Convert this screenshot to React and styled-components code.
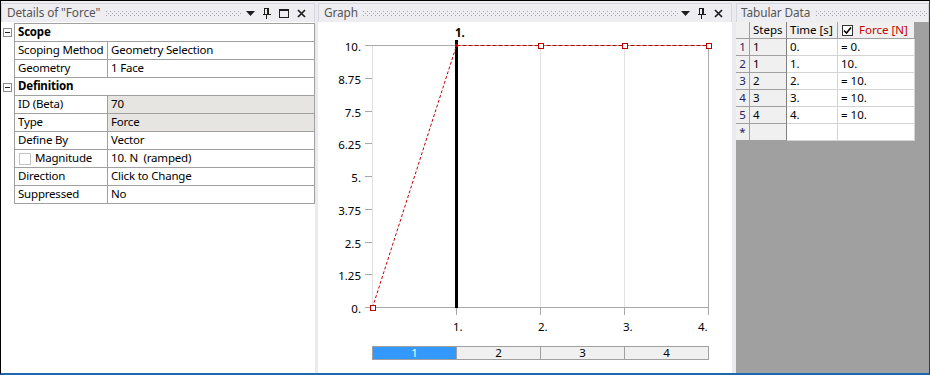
import React from 'react';
import styled, { createGlobalStyle } from 'styled-components';

const Global = createGlobalStyle`
  html, body { margin: 0; padding: 0; background: #fff; }
  body { font-family: "Noto Sans", "DejaVu Sans", sans-serif; }
`;

const FONT = `"Noto Sans", "DejaVu Sans", sans-serif`;

const Frame = styled.div`
  width: 930px;
  height: 375px;
  box-sizing: border-box;
  border-top: 1px solid #000;
  border-left: 1px solid #000;
  border-right: 1px solid #3a3a3a;
  border-bottom: 2px solid #1b6ab0;
  background: #eeeef2;
  display: flex;
  font-family: ${FONT};
  font-size: 11.5px;
  color: #000;
  overflow: hidden;
`;

const Panel = styled.div`
  width: ${(p) => p.$w}px;
  flex: none;
  display: flex;
  flex-direction: column;
  min-height: 0;
`;

const Splitter = styled.div`
  width: ${(p) => p.$w}px;
  flex: none;
  background: #ebebef;
`;

const Header = styled.div`
  margin-top: 2px;
  height: 19px;
  box-sizing: border-box;
  border: 1px solid #d6d6de;
  border-bottom: none;
  background: #eeeef2;
  display: flex;
  align-items: center;
  padding: 0 8px 2px ${(p) => p.$pl}px;
  color: #555;
  font-size: 11.8px;
  letter-spacing: -0.1px;
  white-space: nowrap;
`;

const Dots = styled.div`
  flex: 1;
  height: 5px;
  margin: 2px ${(p) => p.$mr}px 0 ${(p) => p.$ml}px;
  background-image:
    conic-gradient(from 90deg at 1px 1px, transparent 0 50%, #a4a4ac 0 75%, transparent 0),
    conic-gradient(from 90deg at 1px 1px, transparent 0 50%, #a4a4ac 0 75%, transparent 0);
  background-size: 4px 4px, 4px 4px;
  background-position: 0 0, 2px 2px;
`;

const Icons = styled.div`
  display: flex;
  align-items: center;
  gap: ${(p) => p.$gap}px;
  margin-top: 2px;
`;

const Content = styled.div`
  flex: 1;
  min-height: 0;
  background: ${(p) => p.$bg};
  display: flex;
  flex-direction: column;
`;

/* ---------- property grid ---------- */
const PropGrid = styled.div`
  margin-top: 1px;
  display: flex;
  flex-direction: column;
  letter-spacing: -0.2px;
`;

const PropRow = styled.div`
  display: flex;
  height: 18px;
  &:first-child { height: 19px; }
`;

const Gutter = styled.div`
  width: 13px;
  flex: none;
  display: flex;
  align-items: center;
  padding-left: 2px;
  box-sizing: border-box;
`;

const CollapseBox = styled.div`
  width: 9px;
  height: 9px;
  box-sizing: border-box;
  border: 1px solid #8a8a8a;
  display: flex;
  align-items: center;
  justify-content: center;
  &::after {
    content: '';
    width: 5px;
    height: 1px;
    background: #222;
  }
`;

const Cells = styled.div`
  width: 301px;
  flex: none;
  display: flex;
  box-sizing: border-box;
  border-left: 1px solid #a0a0a0;
  border-right: 1px solid #a0a0a0;
  border-bottom: 1px solid #a0a0a0;
  ${PropRow}:first-child & { border-top: 1px solid #a0a0a0; }
`;

const NameCell = styled.div`
  width: 93px;
  flex: none;
  border-right: 1px solid #a0a0a0;
  display: flex;
  align-items: center;
  padding: 0 0 2px 3px;
  box-sizing: border-box;
  white-space: nowrap;
`;

const ValueCell = styled.div`
  flex: 1;
  display: flex;
  align-items: center;
  padding: 0 0 2px 3px;
  background: ${(p) => (p.$ro ? '#e7e5e2' : '#fff')};
  white-space: pre;
`;

const GroupCell = styled.div`
  flex: 1;
  display: flex;
  align-items: center;
  padding: 0 0 2px 3px;
  font-weight: 700;
`;

const CheckBox = styled.div`
  width: 12px;
  height: 12px;
  box-sizing: border-box;
  border: 1px solid #c4c4c4;
  background: #fff;
  margin: 2px 4px 0 1px;
`;

/* ---------- graph ---------- */
const StepBar = styled.div`
  margin: 6px 0 0 54px;
  width: 337px;
  height: 14px;
  box-sizing: border-box;
  border: 1px solid #a0a0a0;
  display: flex;
`;

const StepSeg = styled.div`
  flex: 1;
  display: flex;
  align-items: center;
  justify-content: center;
  font-size: 11.5px;
  line-height: 1;
  background: ${(p) => (p.$active ? '#3399ff' : '#f0f0f0')};
  color: ${(p) => (p.$active ? '#fff' : '#000')};
  & + & { border-left: 1px solid #a0a0a0; }
`;

/* ---------- tabular ---------- */
const DataGrid = styled.div`
  display: grid;
  grid-template-columns: 14px 37px 51px 77px;
  grid-auto-rows: 17px;
  width: 179px;
`;

const DCell = styled.div`
  box-sizing: border-box;
  display: flex;
  align-items: center;
  justify-content: ${(p) => (p.$center ? 'center' : 'flex-start')};
  padding: 0 0 1px ${(p) => (p.$center ? 0 : 3)}px;
  white-space: pre;
  background: ${(p) => (p.$gray ? '#f0f0f0' : '#fff')};
  border-right: 1px solid ${(p) => p.$br || (p.$gray ? '#a0a0a0' : '#d4d4d4')};
  border-bottom: 1px solid ${(p) => (p.$gray ? '#a0a0a0' : '#d4d4d4')};
  color: ${(p) => p.$color || '#000'};
`;

const HeadCheck = styled.div`
  width: 11px;
  height: 11px;
  box-sizing: border-box;
  border: 1px solid #333;
  background: #fff;
  margin: 1px 6px 0 1px;
  display: flex;
  align-items: center;
  justify-content: center;
`;

/* ---------- icons ---------- */
const DropIcon = () => (
  <svg width="9" height="5" viewBox="0 0 9 5"><polygon points="0,0 9,0 4.5,5" fill="#1e1e1e" /></svg>
);
const PinIcon = () => (
  <svg width="8" height="11" viewBox="0 0 8 11">
    <rect x="1.5" y="0.5" width="4" height="6" fill="none" stroke="#1e1e1e" />
    <rect x="4" y="0" width="2" height="7" fill="#1e1e1e" />
    <rect x="0" y="6" width="8" height="1" fill="#1e1e1e" />
    <rect x="3" y="7" width="1" height="4" fill="#1e1e1e" />
  </svg>
);
const MaxIcon = () => (
  <svg width="10" height="9" viewBox="0 0 10 9">
    <rect x="0.5" y="1" width="9" height="7.5" fill="none" stroke="#1e1e1e" />
    <rect x="0" y="0" width="10" height="2" fill="#1e1e1e" />
  </svg>
);
const CloseIcon = () => (
  <svg width="9" height="9" viewBox="0 0 9 9">
    <path d="M1 1 L8 8 M8 1 L1 8" stroke="#1e1e1e" strokeWidth="1.7" />
  </svg>
);
const CheckMark = () => (
  <svg width="9" height="9" viewBox="0 0 9 9">
    <path d="M1 4.5 L3.5 7 L8 1.5" fill="none" stroke="#000" strokeWidth="1.6" />
  </svg>
);

/* ---------- chart ---------- */
const X = [54, 138, 222, 306, 390];
const yTop = 23;
const yBot = 285;
const yLabels = ['10.', '8.75', '7.5', '6.25', '5.', '3.75', '2.5', '1.25', '0.'];

const Chart = () => {
  const step = (yBot - yTop) / 8;
  return (
    <svg width="414" height="318" viewBox="0 0 414 318" style={{ display: 'block' }} fontFamily={FONT} fontSize="11.5">
      {[0, 2, 3].map((i) => (
        <line key={i} x1={X[i] + 0.5} y1={yTop} x2={X[i] + 0.5} y2={yBot} stroke="#e2e2e2" />
      ))}
      <line x1={X[4] + 0.5} y1={yTop} x2={X[4] + 0.5} y2={yBot} stroke="#acacac" />
      <line x1={47} y1={yTop + 0.5} x2={391} y2={yTop + 0.5} stroke="#a8a8a8" />
      <line x1={47} y1={yBot + 0.5} x2={391} y2={yBot + 0.5} stroke="#a8a8a8" />
      {yLabels.map((l, i) => {
        const y = Math.round(yTop + i * step);
        return (
          <g key={l}>
            <line x1={47} y1={y + 0.5} x2={54} y2={y + 0.5} stroke="#a8a8a8" />
            <text x={43} y={y + 1} textAnchor="end" dominantBaseline="central" fill="#000">{l}</text>
          </g>
        );
      })}
      {X.slice(1).map((x) => (
        <line key={x} x1={x + 0.5} y1={yBot} x2={x + 0.5} y2={293} stroke="#a8a8a8" />
      ))}
      <text x={135} y={304} dominantBaseline="central" fill="#000">1.</text>
      <text x={220} y={304} dominantBaseline="central" fill="#000">2.</text>
      <text x={305} y={304} dominantBaseline="central" fill="#000">3.</text>
      <text x={380} y={304} dominantBaseline="central" fill="#000">4.</text>
      <rect x={137} y={18} width={3} height={268} fill="#000" />
      <text x={137} y={10} dominantBaseline="central" fontWeight="700" fill="#000">1.</text>
      <line x1={54.5} y1={yBot + 0.5} x2={138.5} y2={yTop + 0.5} stroke="#c00000" strokeDasharray="3 2" />
      <line x1={138.5} y1={yTop + 0.5} x2={390.5} y2={yTop + 0.5} stroke="#c00000" strokeDasharray="4 2" />
      <rect x={137} y={yTop - 1} width={3} height={3} fill="#c00000" />
      {[[X[0], yBot], [X[2], yTop], [X[3], yTop], [X[4], yTop]].map(([x, y]) => (
        <rect key={x} x={x - 2 + 0.5} y={y - 2 + 0.5} width={5} height={5} fill="#fff" stroke="#c00000" />
      ))}
    </svg>
  );
};

const props = [
  { group: 'Scope' },
  { name: 'Scoping Method', value: 'Geometry Selection' },
  { name: 'Geometry', value: '1 Face' },
  { group: 'Definition' },
  { name: 'ID (Beta)', value: '70', ro: true },
  { name: 'Type', value: 'Force', ro: true },
  { name: 'Define By', value: 'Vector' },
  { name: 'Magnitude', value: '10. N  (ramped)', check: true },
  { name: 'Direction', value: 'Click to Change' },
  { name: 'Suppressed', value: 'No' },
];

const rows = [
  ['1', '1', '0.', '= 0.'],
  ['2', '1', '1.', '10.'],
  ['3', '2', '2.', '= 10.'],
  ['4', '3', '3.', '= 10.'],
  ['5', '4', '4.', '= 10.'],
  ['*', '', '', ''],
];

export default function App() {
  return (
    <>
      <Global />
      <Frame>
        <Panel $w={314}>
          <Header $pl={5}>
            <span>Details of "Force"</span>
            <Dots $ml={6} $mr={4} />
            <Icons $gap={8}>
              <DropIcon />
              <PinIcon />
              <MaxIcon />
              <CloseIcon />
            </Icons>
          </Header>
          <Content $bg="#fff">
            <PropGrid>
              {props.map((p, i) => (
                <PropRow key={i}>
                  <Gutter>{p.group && <CollapseBox />}</Gutter>
                  <Cells>
                    {p.group ? (
                      <GroupCell>{p.group}</GroupCell>
                    ) : (
                      <>
                        <NameCell>
                          {p.check && <CheckBox />}
                          {p.name}
                        </NameCell>
                        <ValueCell $ro={p.ro}>{p.value}</ValueCell>
                      </>
                    )}
                  </Cells>
                </PropRow>
              ))}
            </PropGrid>
          </Content>
        </Panel>
        <Splitter $w={3} />
        <Panel $w={414}>
          <Header $pl={5}>
            <span>Graph</span>
            <Dots $ml={5} $mr={3} />
            <Icons $gap={8}>
              <DropIcon />
              <PinIcon />
              <CloseIcon />
            </Icons>
          </Header>
          <Content $bg="#fff">
            <Chart />
            <StepBar>
              <StepSeg $active>1</StepSeg>
              <StepSeg>2</StepSeg>
              <StepSeg>3</StepSeg>
              <StepSeg>4</StepSeg>
            </StepBar>
          </Content>
        </Panel>
        <Splitter $w={4} />
        <Panel $w={193}>
          <Header $pl={4}>
            <span>Tabular Data</span>
            <Dots $ml={6} $mr={-8} />
          </Header>
          <Content $bg="#a0a0a0">
            <DataGrid>
              <DCell $gray />
              <DCell $gray $br="#808080">Steps</DCell>
              <DCell $gray>Time [s]</DCell>
              <DCell $gray $color="#c00000">
                <HeadCheck><CheckMark /></HeadCheck>
                Force [N]
              </DCell>
              {rows.map((r) => (
                <React.Fragment key={r[0]}>
                  <DCell $gray $center $color="#222266">{r[0]}</DCell>
                  <DCell $gray $br="#808080">{r[1]}</DCell>
                  <DCell>{r[2]}</DCell>
                  <DCell>{r[3]}</DCell>
                </React.Fragment>
              ))}
            </DataGrid>
          </Content>
        </Panel>
      </Frame>
    </>
  );
}
